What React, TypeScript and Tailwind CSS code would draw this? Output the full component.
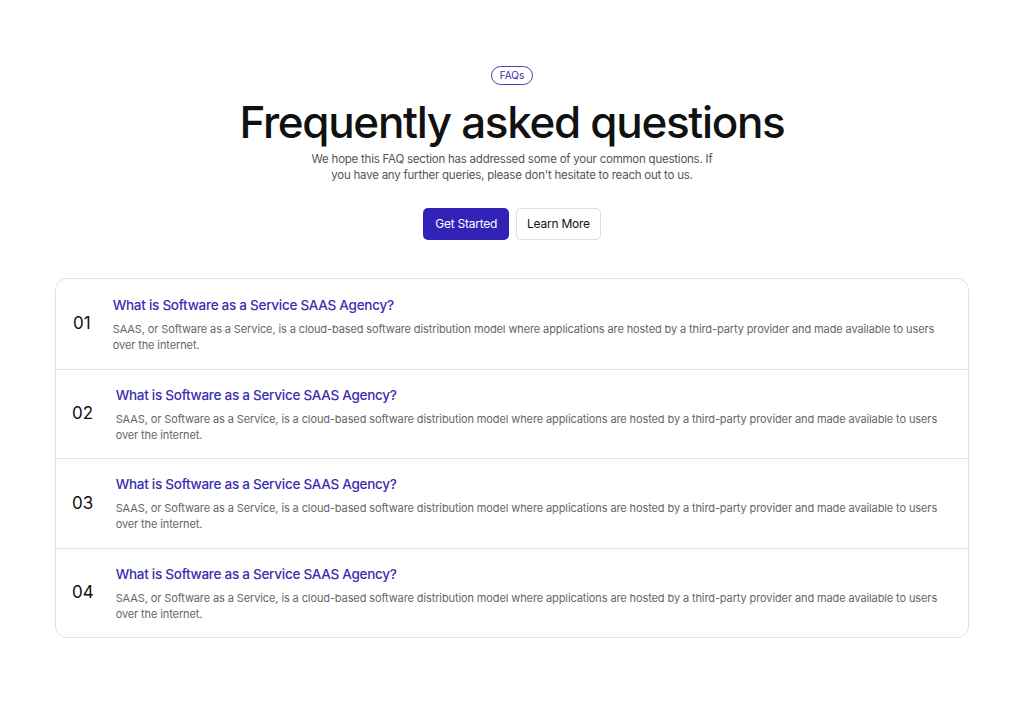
const faqs = [
  { n: "01", pad: "pl-[17px]", gap: "gap-[17px]" },
  { n: "02", pad: "pl-4", gap: "gap-[21px]" },
  { n: "03", pad: "pl-4", gap: "gap-[21px]" },
  { n: "04", pad: "pl-4", gap: "gap-[21px]" },
];

export default function App() {
  return (
    <div className="min-h-[703px] bg-white font-['Inter',sans-serif] text-[#111]">
      <section className="flex flex-col items-center pt-[66px]">
        <span className="rounded-full border border-[#4b3fb8] px-2 py-[2px] text-[10px] leading-[13px] text-[#3b2fa8]">
          FAQs
        </span>
        <h1 className="mt-[10px] text-[44px] font-medium leading-[54px] tracking-[-0.03em] text-[#111]">
          Frequently asked questions
        </h1>
        <p className="mt-[2px] text-center text-[11.5px] leading-[16px] tracking-[-0.02em] text-[#555]">
          We hope this FAQ section has addressed some of your common questions. If
          <br />
          you have any further queries, please don&apos;t hesitate to reach out to us.
        </p>
        <div className="mt-[25px] flex gap-[7px]">
          <button className="h-[32px] rounded-[5px] bg-[#3222b8] px-3 text-[12px] tracking-[-0.02em] text-white">
            Get Started
          </button>
          <button className="h-[32px] rounded-[5px] border border-[#ddd] bg-white px-[10px] text-[12px] tracking-[-0.02em] text-[#111]">
            Learn More
          </button>
        </div>
      </section>

      <div className="mx-[55px] mt-[38px] overflow-hidden rounded-[12px] border border-[#e3e3e3]">
        {faqs.map((f, i) => (
          <div
            key={f.n}
            className={`flex h-[89.5px] items-center ${f.gap} ${f.pad} pr-[26px] ${i > 0 ? "border-t border-[#e3e3e3]" : ""}`}
          >
            <span className="w-[25px] text-[17px] leading-none text-[#111]">{f.n}</span>
            <div className="flex max-w-[830px] flex-col">
              <h3 className="text-[13.5px] font-medium leading-[20px] tracking-[-0.02em] text-[#3a2db0]">
                What is Software as a Service SAAS Agency?
              </h3>
              <p className="mt-[6px] text-[11px] leading-[16px] tracking-[-0.01em] text-[#666]">
                SAAS, or Software as a Service, is a cloud-based software distribution model where
                applications are hosted by a third-party provider and made available to users over
                the internet.
              </p>
            </div>
          </div>
        ))}
      </div>
    </div>
  );
}
